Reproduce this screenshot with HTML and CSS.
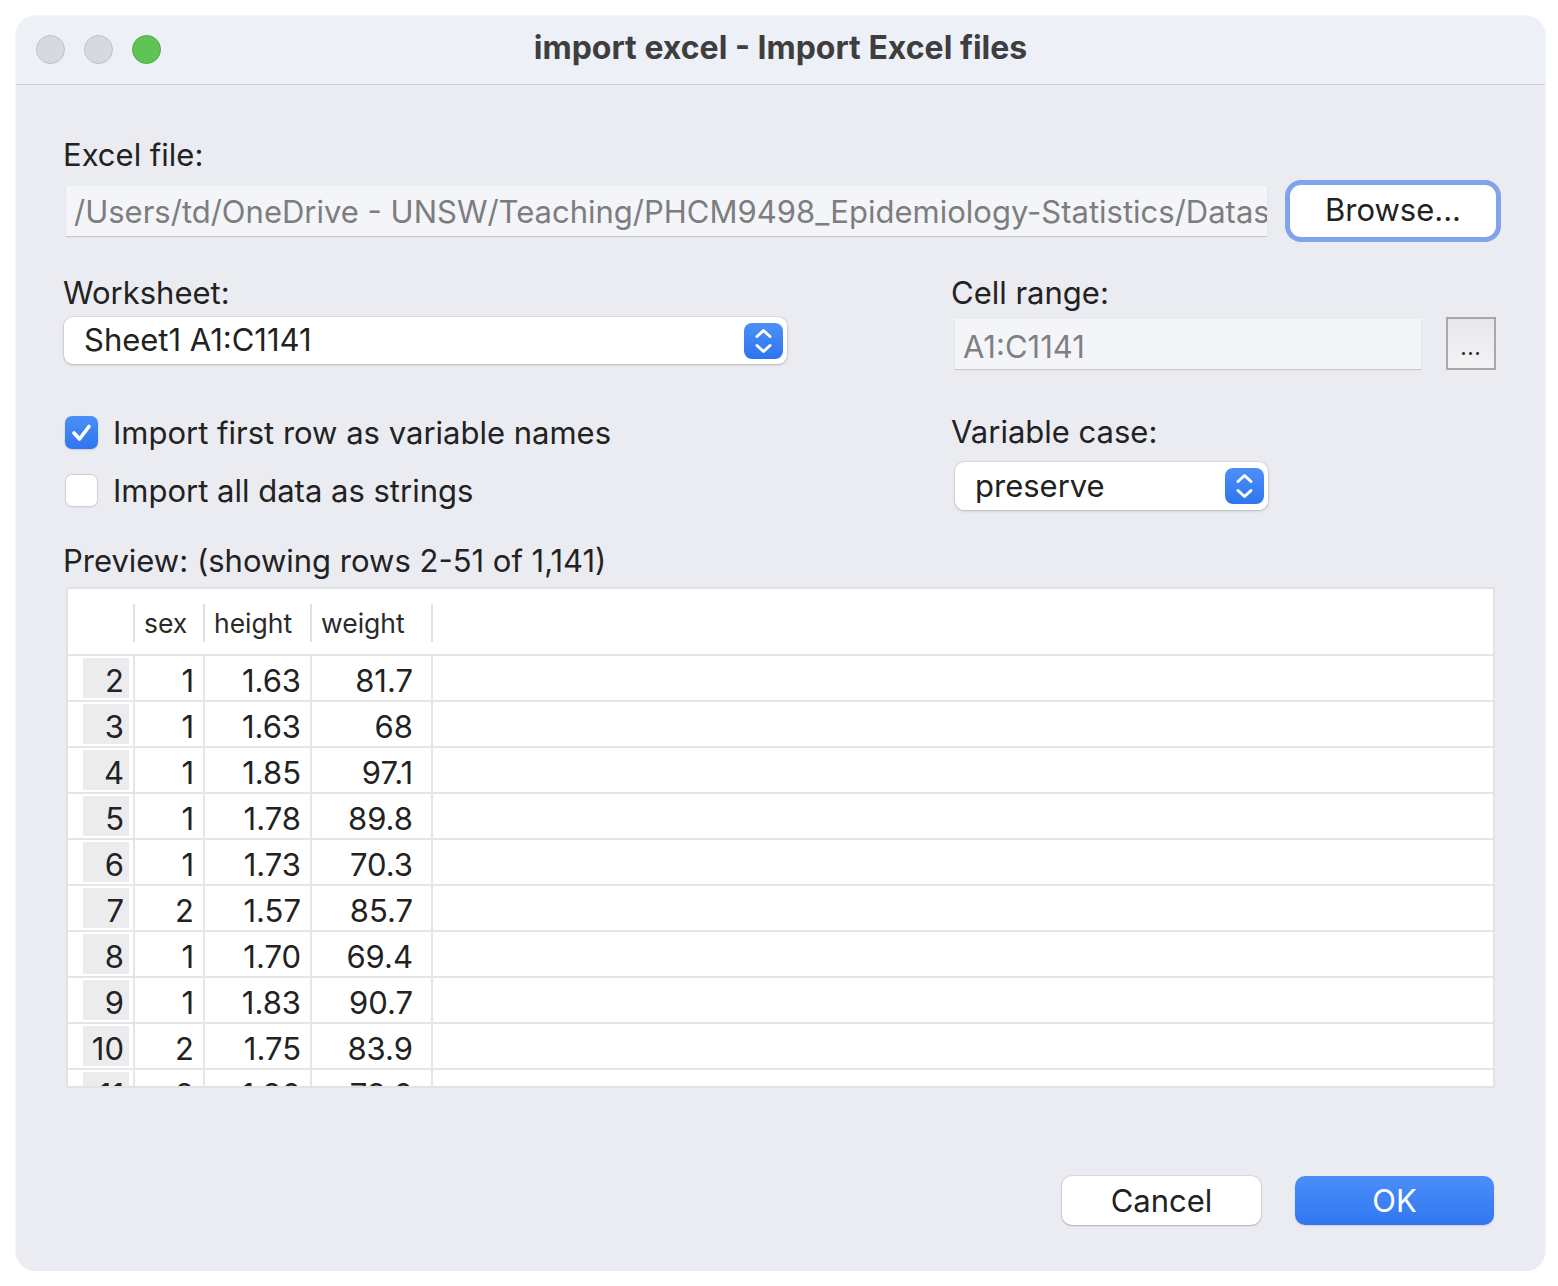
FILE: index.html
```html
<!DOCTYPE html>
<html>
<head>
<meta charset="utf-8">
<link rel="stylesheet" href="styles.css">
</head>
<body>
<div class="window">
  <div class="titlebar">
    <div class="lights">
      <span class="light gray"></span>
      <span class="light gray"></span>
      <span class="light green"></span>
    </div>
    <div class="title">import excel - Import Excel files</div>
  </div>
  <div class="content">
    <div class="label">Excel file:</div>
    <div class="file-row">
      <div class="field path">/Users/td/OneDrive - UNSW/Teaching/PHCM9498_Epidemiology-Statistics/Datas</div>
      <div class="browse"><div class="browse-inner">Browse...</div></div>
    </div>

    <div class="two-col sec2">
      <div class="col-left">
        <div class="label">Worksheet:</div>
        <div class="select sheet">
          <span class="select-text">Sheet1 A1:C1141</span>
          <span class="stepper">
            <svg width="39" height="36" viewBox="0 0 39 36"><path d="M13 13.5 L19.5 7.5 L26 13.5 M13 22.5 L19.5 28.5 L26 22.5" fill="none" stroke="#fff" stroke-width="3" stroke-linecap="round" stroke-linejoin="round"/></svg>
          </span>
        </div>
      </div>
      <div class="col-right">
        <div class="label">Cell range:</div>
        <div class="range-row">
          <div class="field range">A1:C1141</div>
          <div class="dots">...</div>
        </div>
      </div>
    </div>

    <div class="two-col sec3">
      <div class="col-left">
        <div class="check-row">
          <span class="cb checked">
            <svg width="33" height="33" viewBox="0 0 33 33"><path d="M9 17 L14.5 23 L24 10.5" fill="none" stroke="#fff" stroke-width="3.6" stroke-linecap="round" stroke-linejoin="round"/></svg>
          </span>
          <span class="check-label">Import first row as variable names</span>
        </div>
        <div class="check-row">
          <span class="cb"></span>
          <span class="check-label">Import all data as strings</span>
        </div>
      </div>
      <div class="col-right">
        <div class="label">Variable case:</div>
        <div class="select case">
          <span class="select-text">preserve</span>
          <span class="stepper">
            <svg width="39" height="36" viewBox="0 0 39 36"><path d="M13 13.5 L19.5 7.5 L26 13.5 M13 22.5 L19.5 28.5 L26 22.5" fill="none" stroke="#fff" stroke-width="3" stroke-linecap="round" stroke-linejoin="round"/></svg>
          </span>
        </div>
      </div>
    </div>

    <div class="label preview-label">Preview: (showing rows 2-51 of 1,141)</div>
    <div class="preview">
      <div class="grow head">
        <div class="hc"></div>
        <div class="hc"><span>sex</span></div>
        <div class="hc"><span>height</span></div>
        <div class="hc"><span>weight</span></div>
        <div class="hc last"></div>
      </div>
      <div class="grow"><div class="c num"><span>2</span></div><div class="c">1</div><div class="c">1.63</div><div class="c w">81.7</div><div class="c last"></div></div>
      <div class="grow"><div class="c num"><span>3</span></div><div class="c">1</div><div class="c">1.63</div><div class="c w">68</div><div class="c last"></div></div>
      <div class="grow"><div class="c num"><span>4</span></div><div class="c">1</div><div class="c">1.85</div><div class="c w">97.1</div><div class="c last"></div></div>
      <div class="grow"><div class="c num"><span>5</span></div><div class="c">1</div><div class="c">1.78</div><div class="c w">89.8</div><div class="c last"></div></div>
      <div class="grow"><div class="c num"><span>6</span></div><div class="c">1</div><div class="c">1.73</div><div class="c w">70.3</div><div class="c last"></div></div>
      <div class="grow"><div class="c num"><span>7</span></div><div class="c">2</div><div class="c">1.57</div><div class="c w">85.7</div><div class="c last"></div></div>
      <div class="grow"><div class="c num"><span>8</span></div><div class="c">1</div><div class="c">1.70</div><div class="c w">69.4</div><div class="c last"></div></div>
      <div class="grow"><div class="c num"><span>9</span></div><div class="c">1</div><div class="c">1.83</div><div class="c w">90.7</div><div class="c last"></div></div>
      <div class="grow"><div class="c num"><span>10</span></div><div class="c">2</div><div class="c">1.75</div><div class="c w">83.9</div><div class="c last"></div></div>
      <div class="grow"><div class="c num"><span>11</span></div><div class="c">2</div><div class="c">1.80</div><div class="c w">73.0</div><div class="c last"></div></div>
    </div>

    <div class="buttons">
      <div class="btn cancel">Cancel</div>
      <div class="btn ok">OK</div>
    </div>
  </div>
</div>
</body>
</html>
```

FILE: styles.css
```css
* { box-sizing: border-box; }
html, body { margin: 0; padding: 0; background: #ffffff; }
body {
  font-family: Inter, "Noto Sans", "Liberation Sans", sans-serif;
  color: #222222;
}
.window {
  margin: 16px 0 0 16px;
  width: 1529px;
  height: 1255px;
  border-radius: 20px;
  background: #ebecf1;
  overflow: hidden;
  box-shadow: 0 0 0 1px rgba(0,0,0,0.04);
}
.titlebar {
  height: 69px;
  background: #eef0f8;
  border-bottom: 1px solid #cfd0d6;
  display: flex;
  align-items: center;
  position: relative;
}
.lights {
  display: flex;
  gap: 19px;
  padding-left: 20px;
  position: absolute;
  left: 0;
  top: 19px;
}
.light {
  width: 29px;
  height: 29px;
  border-radius: 50%;
}
.light.gray { background: #d8d9df; border: 1px solid #bfc0c6; }
.light.green { background: #5fc454; border: 1px solid #4eaa43; }
.title {
  flex: 1;
  text-align: center;
  font-weight: 700;
  font-size: 32px;
  color: #3e3e40;
  margin-top: -5px;
}
.content {
  padding: 52px 49px 0 47px;
}
.label {
  font-size: 31px;
  line-height: 36px;
  height: 36px;
  color: #222;
  white-space: nowrap;
}
.file-row {
  margin-top: 7px;
  display: flex;
  align-items: center;
  gap: 18px;
  height: 61px;
  margin-right: -5px;
}
.field {
  height: 50px;
  background: #f4f5f8;
  box-shadow: 0 1px 1px rgba(0,0,0,0.15);
  color: #7d7d80;
  font-size: 31px;
  line-height: 52px;
  padding-left: 8px;
  white-space: nowrap;
  overflow: hidden;
}
.path { flex: 1; margin-left: 3px; }
.browse {
  width: 216px;
  height: 62px;
  border-radius: 16px;
  background: #80a3ea;
  padding: 5px;
  flex: none;
}
.browse-inner {
  height: 100%;
  border-radius: 11px;
  background: #fff;
  font-size: 31px;
  line-height: 50px;
  text-align: center;
}
.two-col {
  display: grid;
  grid-template-columns: 888px 1fr;
}
.sec2 { margin-top: 34px; }
.select {
  background: #fff;
  border-radius: 9px;
  box-shadow: 0 0 0 1px rgba(0,0,0,0.06), 0 1px 3px rgba(0,0,0,0.18);
  display: flex;
  align-items: center;
  justify-content: space-between;
  padding: 0 4px 0 20px;
  font-size: 31px;
}
.select-text { margin-top: -2px; }
.sheet { margin-top: 6px; margin-left: 1px; width: 723px; height: 47px; }
.stepper {
  width: 39px;
  height: 36px;
  border-radius: 8px;
  background: linear-gradient(#4b90f8, #2f74ef);
  display: flex;
}
.range-row {
  margin-top: 6px;
  display: flex;
  align-items: flex-start;
  gap: 25px;
}
.range {
  margin-top: 2px;
  margin-left: 4px;
  width: 466px;
  height: 50px;
  line-height: 56px;
  color: #808083;
}
.dots {
  width: 50px;
  height: 53px;
  border: 2px solid #a8a8ab;
  background: linear-gradient(#e7e7e9, #f3f3f5);
  font-size: 18px;
  text-align: center;
  line-height: 60px;
  font-weight: 700;
  color: #333;
  letter-spacing: 1px;
}
.sec3 { margin-top: 44px; }
.check-row {
  display: flex;
  align-items: center;
  height: 58px;
  margin-top: -11px;
}
.check-row + .check-row { margin-top: 0; }
.cb {
  width: 33px;
  height: 33px;
  border-radius: 7px;
  margin-left: 2px;
  background: #fff;
  box-shadow: 0 0 0 1px #cfcfd3 inset, 0 1px 1px rgba(0,0,0,0.05);
  display: flex;
  flex: none;
}
.cb.checked {
  background: linear-gradient(#4b90f8, #2f74ef);
  box-shadow: 0 1px 2px rgba(0,0,0,0.15);
}
.check-label {
  margin-left: 15px;
  font-size: 31px;
  white-space: nowrap;
}
.case { margin-top: 12px; margin-left: 4px; width: 313px; height: 48px; }
.preview-label { margin-top: 24px; }
.preview {
  margin-top: 8px;
  margin-left: 3px;
  width: 1429px;
  height: 501px;
  border: 2px solid #e2e2e5;
  background: #fff;
  overflow: hidden;
}
.grow {
  display: grid;
  grid-template-columns: 67px 70px 107px 121px 1fr;
  height: 46px;
  border-bottom: 2px solid #e6e6e8;
}
.grow.head {
  height: 67px;
  align-items: center;
  padding-top: 2px;
}
.hc {
  height: 38px;
  border-right: 2px solid #e0e0e3;
  font-size: 26.5px;
  line-height: 38px;
  padding-left: 9px;
  color: #2a2a2a;
}
.hc.last, .c.last { border-right: none; }
.c {
  border-right: 2px solid #e6e6e8;
  font-size: 31px;
  line-height: 46px;
  padding-top: 2px;
  text-align: right;
  padding-right: 9px;
  color: #222;
}
.c.w { padding-right: 18px; }
.c.num {
  padding: 2px 4px 2px 15px;
}
.c.num span {
  display: block;
  height: 40px;
  line-height: 46px;
  background: #ececee;
  padding-right: 5px;
}
.buttons {
  display: flex;
  justify-content: flex-end;
  gap: 34px;
  margin-top: 88px;
  padding-right: 2px;
}
.btn {
  width: 199px;
  height: 49px;
  border-radius: 10px;
  font-size: 31px;
  line-height: 49px;
  text-align: center;
}
.cancel {
  background: #fff;
  box-shadow: 0 0 0 1px rgba(0,0,0,0.07), 0 1px 2px rgba(0,0,0,0.2);
}
.ok {
  background: linear-gradient(#4a8ff8, #3176f1);
  color: #fff;
  box-shadow: 0 1px 2px rgba(0,0,0,0.12);
}
```
